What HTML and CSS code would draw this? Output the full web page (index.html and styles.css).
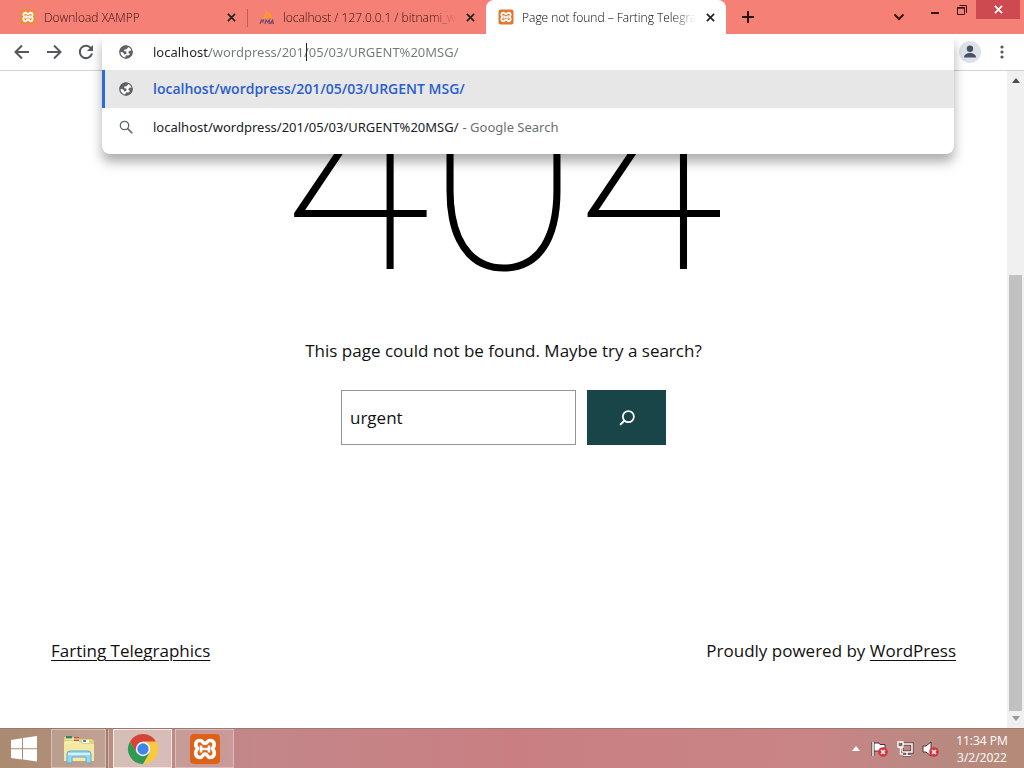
FILE: index.html
```html
<!DOCTYPE html>
<html lang="en">
<head>
<meta charset="utf-8">
<title>Page not found – Farting Telegraphics</title>
<link rel="stylesheet" href="styles.css">
</head>
<body>
<svg class="defs" aria-hidden="true">
  <defs>
    <symbol id="xampp" viewBox="0 0 32 32">
      <rect x="1" y="1" width="30" height="30" rx="4" fill="currentColor"/>
      <path d="M11 7.500C6.500 7.500 5.500 12 8.500 15.500C5 20 7 24.500 11 24.500C14 24.500 13.500 21 16 21C18.500 21 18 24.500 21 24.500C25 24.500 27 20 23.500 15.500C26.500 12 25.500 7.500 21 7.500C18 7.500 18.500 10.500 16 10.500C13.500 10.500 14 7.500 11 7.500Z" fill="none" stroke="#fff" stroke-width="3.600"/>
      <path d="M12 12.500V19.500M20 12.500V19.500M12 16H20" fill="none" stroke="#fff" stroke-width="2.600"/>
    </symbol>
    <symbol id="cross" viewBox="0 0 10 10">
      <path d="M1 1L9 9M9 1L1 9" fill="none" stroke="currentColor" stroke-width="1.900"/>
    </symbol>
    <symbol id="globe" viewBox="0 0 16 16">
      <circle cx="8" cy="8" r="6.200" fill="#fff" stroke="#5f6368" stroke-width="1.300"/>
      <path d="M8.500 1.500C5 1.300 1.500 4 1.500 8L5 8.300L6.200 10.500L8.500 9.800L8.300 7.600L6.300 7.200V5.600L8.600 5.200L10.300 3.300ZM14.500 7L11.800 6.600L10.200 8.200L12 10.200L10.200 11.500L8 11.300L6.800 14.400C11 15 14.600 12 14.500 7Z" fill="#5f6368"/>
    </symbol>
    <symbol id="error" viewBox="0 0 10 10">
      <circle cx="5" cy="5" r="4.800" fill="#d8323c"/>
      <path d="M3 3L7 7M7 3L3 7" stroke="#fff" stroke-width="1.500"/>
    </symbol>
  </defs>
</svg>
<div class="desktop">
  <header class="tabstrip">
    <div class="tab">
      <svg class="favicon amber"><use href="#xampp"/></svg>
      <span class="tab-title">Download XAMPP</span>
      <button class="tab-close" aria-label="Close tab"><svg><use href="#cross"/></svg></button>
    </div>
    <div class="tab divided">
      <svg class="favicon pma" viewBox="0 0 16 16">
        <path d="M8 1V9L3 9.500C5 7 7 4 8 1ZM9 3C12 5 13 7 14 9L9 9.500Z" fill="#f89c2a"/>
        <path d="M1 15L2.500 11H4.500L4 13H2M6 15L7 11L8.500 13L10.500 11L10 15M11 15L13.500 11L14.500 15M12 14H14" fill="none" stroke="#704a70" stroke-width="1.200"/>
      </svg>
      <span class="tab-title">localhost / 127.0.0.1 / bitnami_wo</span>
      <button class="tab-close" aria-label="Close tab"><svg><use href="#cross"/></svg></button>
    </div>
    <div class="tab active">
      <svg class="favicon orange"><use href="#xampp"/></svg>
      <span class="tab-title">Page not found – Farting Telegra</span>
      <button class="tab-close" aria-label="Close tab"><svg><use href="#cross"/></svg></button>
    </div>
    <button class="new-tab" aria-label="New tab"><svg viewBox="0 0 12 12"><path d="M6 0V12M0 6H12" stroke="currentColor" stroke-width="2"/></svg></button>
    <div class="window-buttons">
      <button class="search-tabs" aria-label="Search tabs"><svg viewBox="0 0 12 8"><path d="M1.500 1.500L6 6L10.500 1.500" fill="none" stroke="currentColor" stroke-width="2"/></svg></button>
      <button class="win" aria-label="Minimize"><svg viewBox="0 0 12 12"><path d="M2 9H10" stroke="currentColor" stroke-width="2"/></svg></button>
      <button class="win" aria-label="Restore"><svg viewBox="0 0 12 12"><path d="M1.500 3.500H8.500V10.500H1.500ZM1 4.200H9M3.500 1.500H10.500V9" fill="none" stroke="currentColor"/></svg></button>
      <button class="win close" aria-label="Close"><svg><use href="#cross"/></svg></button>
    </div>
  </header>
  <div class="toolbar">
    <nav class="nav">
      <button aria-label="Back"><svg viewBox="0 0 16 16"><path d="M15 8H2M8 1.500L1.500 8L8 14.500" /></svg></button>
      <button aria-label="Forward"><svg viewBox="0 0 16 16"><path d="M1 8H14M8 1.500L14.500 8L8 14.500"/></svg></button>
      <button aria-label="Reload"><svg viewBox="0 0 16 16"><path d="M13.200 4.500A6.200 6.200 0 1 0 14 9.500"/><path class="solid" d="M15 1V7H9Z"/></svg></button>
    </nav>
    <div class="omnibox">
      <div class="suggestions">
        <div class="row url-row">
          <svg class="row-icon"><use href="#globe"/></svg>
          <div class="url-wrap">
            <input class="url" aria-label="Address" value="localhost/wordpress/201/05/03/URGENT%20MSG/">
            <span class="caret"></span>
          </div>
        </div>
        <a class="row selected" href="#">
          <svg class="row-icon"><use href="#globe"/></svg>
          <span>localhost/wordpress/201/05/03/URGENT MSG/</span>
        </a>
        <a class="row" href="#">
          <svg class="row-icon" viewBox="0 0 16 16"><circle cx="6.500" cy="6.500" r="4.200" fill="none" stroke="#5f6368" stroke-width="1.300"/><path d="M9.600 9.600L14.300 14.300" stroke="#5f6368" stroke-width="1.600"/></svg>
          <span>localhost/wordpress/201/05/03/URGENT%20MSG/</span>
          <span class="muted">- Google Search</span>
        </a>
      </div>
    </div>
    <div class="tools">
      <button class="profile" aria-label="Profile"><svg viewBox="0 0 22 22"><circle cx="11" cy="11" r="11" fill="#dde1ea"/><circle cx="11" cy="7.800" r="3.200" fill="#474f60"/><path d="M5 16.500C5 10.500 17 10.500 17 16.500Z" fill="#474f60"/></svg></button>
      <button class="menu" aria-label="Menu"><svg viewBox="0 0 4 14"><g fill="#55585d"><circle cx="2" cy="2" r="1.600"/><circle cx="2" cy="7" r="1.600"/><circle cx="2" cy="12" r="1.600"/></g></svg></button>
    </div>
  </div>
  <div class="viewport">
    <div class="page">
      <main>
        <h1>404</h1>
        <p>This page could not be found. Maybe try a search?</p>
        <form class="search">
          <input type="text" aria-label="Search" value="urgent">
          <button type="button" aria-label="Search"><svg viewBox="0 0 24 24"><circle cx="13.500" cy="10.500" r="6" fill="none" stroke="#fff" stroke-width="1.900"/><path d="M9.200 14.800L4.500 19.500" stroke="#fff" stroke-width="2.200"/></svg></button>
        </form>
      </main>
      <footer>
        <a href="#">Farting Telegraphics</a>
        <span>Proudly powered by <a href="#">WordPress</a></span>
      </footer>
    </div>
    <div class="scrollbar">
      <svg class="arrow" viewBox="0 0 8 5"><path d="M0 5L4 0L8 5Z" fill="#4f4f4f"/></svg>
      <div class="track"><div class="thumb"></div></div>
      <svg class="arrow" viewBox="0 0 8 5"><path d="M0 0L4 5L8 0Z" fill="#9a9a9a"/></svg>
    </div>
  </div>
  <footer class="taskbar">
    <button class="start" aria-label="Start"><svg viewBox="0 0 28 28"><path d="M1 5L12 3.300V13.300H1ZM13 3.100L27 1V13.300H13ZM1 14.300H12V24.500L1 23ZM13 14.300H27V26.500L13 24.600Z" fill="#fff"/></svg></button>
    <button class="app stacked" aria-label="File Explorer"><svg viewBox="0 0 32 32">
      <path d="M1 4H10L12 6H29L31 8V27H1Z" fill="#e4d275"/><path d="M3 3H9V6H3Z" fill="#338a65"/><path d="M11 4H16V8H11Z" fill="#c4513c"/><path d="M19 7H26V10H19Z" fill="#f7faf2"/><path d="M20 7H23V9H20Z" fill="#3b8ac7"/>
      <path d="M1 9H17L19 11H31V28H1Z" fill="#f4e9a2"/><path d="M2 9H16M3 6H16" stroke="#fffbe0"/>
      <path d="M4 30V21Q4 18 7 18H25Q28 18 28 21V30H23V24H9V30Z" fill="#9bd5ee" stroke="#5bacd1"/><path d="M5 21H27" stroke="#e8faff" stroke-width="1.500"/>
    </svg></button>
    <button class="app current" aria-label="Google Chrome"><svg viewBox="0 0 32 32">
      <circle cx="16" cy="16" r="15" fill="#fbc93f"/>
      <path d="M3 8.500A15 15 0 0 1 29 8.500H16L9.500 19.700Z" fill="#d5433a"/>
      <path d="M3 8.500A15 15 0 0 0 16 31L22.500 19.700H9.500Z" fill="#2f9a55"/>
      <circle cx="16" cy="16" r="7.200" fill="#fff"/><circle cx="16" cy="16" r="5.700" fill="#4285e8"/>
    </svg></button>
    <button class="app" aria-label="XAMPP"><svg class="deep"><use href="#xampp"/></svg></button>
    <div class="tray">
      <svg class="chevron" viewBox="0 0 8 5"><path d="M0 5L4 0L8 5Z" fill="#fff"/></svg>
      <svg viewBox="0 0 18 18"><path d="M2 2V16" stroke="#4c3434" stroke-width="3"/><path d="M3 3H8L9 4.500H14V11H3Z" fill="#fff" stroke="#4c3434"/><path d="M2 2V16" stroke="#fff" stroke-width="1.500"/><use href="#error" x="7" y="7" width="10" height="10"/></svg>
      <svg viewBox="0 0 18 18"><path d="M6 4H16V12H6ZM11 12V15M7 15.500H15" fill="none" stroke="#4c3434" stroke-width="3"/><path d="M6 4H16V12H6ZM11 12V15M7 15.500H15" fill="none" stroke="#fff" stroke-width="1.500"/><path d="M2 2H7V7H2ZM4.500 7V14H7" fill="#8a6762" stroke="#fff" stroke-width="1.300"/></svg>
      <svg viewBox="0 0 18 18"><path d="M2 6H5L10 2V16L5 12H2Z" fill="#fff" stroke="#4c3434"/><use href="#error" x="8" y="7" width="10" height="10"/></svg>
      <time class="clock"><span>11:34 PM</span><span>3/2/2022</span></time>
    </div>
  </footer>
</div>
</body>
</html>
```
FILE: styles.css
```css
* { box-sizing: border-box; }
body { margin: 0; font-family: "Open Sans", "Noto Sans", sans-serif; }
button { border: 0; padding: 0; background: none; color: inherit; font: inherit; display: flex; align-items: center; justify-content: center; }
svg { display: block; flex: none; }
a { color: inherit; }
.defs { display: none; }
.desktop { display: flex; flex-direction: column; height: 100vh; min-height: 640px; background: #fff; overflow: hidden; }

.tabstrip { display: flex; height: 34px; flex: none; background: #f58076; color: #35110f; }
.tab { display: flex; align-items: center; flex: 0 1 239px; padding: 0 8px 0 20px; font-size: 12px; font-weight: 300; min-width: 0; }
.tab:first-child { flex-basis: 247px; }
.tab.divided { padding-left: 12px; background: linear-gradient(#b9605a, #b9605a) 0 9px / 1px 18px no-repeat; }
.tab.active { flex-basis: 240px; background: #fff; color: #000; border-radius: 8px 8px 0 0; padding-left: 12px; }
.favicon { width: 16px; height: 16px; margin-right: 8px; }
.amber { color: #ee8c3a; }
.orange { color: #e0762f; }
.deep { color: #dd6116; }
.tab-title { flex: 1; white-space: nowrap; overflow: hidden; margin-right: 6px; mask-image: linear-gradient(90deg, #000 calc(100% - 24px), transparent); }
.tab-close { width: 16px; height: 16px; color: #222; }
.tab-close svg { width: 9px; height: 9px; }
.new-tab { width: 44px; color: #2b1210; }
.new-tab svg { width: 12px; height: 12px; }
.window-buttons { display: flex; margin-left: auto; padding-right: 4px; }
.search-tabs { width: 44px; }
.search-tabs svg { width: 12px; height: 8px; }
.win { width: 27px; height: 19px; }
.win svg { width: 12px; height: 12px; }
.win.close { width: 44px; margin-left: 1px; background: #cd4a50; color: #fff; }
.win.close svg { width: 9px; height: 9px; }

.toolbar { display: flex; height: 37px; flex: none; border-bottom: 1px solid #d0d0d0; }
.nav { display: flex; align-items: center; width: 102px; padding-left: 6px; }
.nav button { width: 32px; height: 32px; }
.nav svg { width: 16px; height: 16px; fill: none; stroke: #55585d; stroke-width: 2; }
.nav .solid { fill: #55585d; stroke: none; }
.omnibox { position: relative; flex: 1; }
.suggestions { position: absolute; z-index: 2; top: 0; left: 0; right: 0; padding-bottom: 8px; background: #fff; border-radius: 8px; box-shadow: 0 8px 12px rgba(0, 0, 0, .32); clip-path: inset(4px -20px -30px -20px); }
.row { display: flex; align-items: center; height: 38px; padding-left: 16px; font-family: "Noto Sans", "Open Sans", sans-serif; font-size: 13px; line-height: 18px; color: #202124; text-decoration: none; white-space: nowrap; }
.url-row { height: 36px; }
.row-icon { width: 16px; height: 16px; margin-right: 19px; }
.row.selected { background: #e7e7e7; color: #2b5fc9; font-family: "Open Sans", "Noto Sans", sans-serif; font-size: 14px; font-weight: 600; border-left: 3px solid #2f6ad9; padding-left: 13px; }
.muted { margin-left: 4px; color: #6b6f74; }
.url-wrap { position: relative; flex: 1; }
.url { display: block; width: 100%; border: 0; padding: 0; outline: 0; font: inherit; color: transparent; background: linear-gradient(90deg, #202124 56px, #73777c 56px); -webkit-background-clip: text; background-clip: text; }
.caret { position: absolute; left: 153px; top: 0; width: 1px; height: 18px; background: #222; }
.tools { display: flex; align-items: center; justify-content: space-between; width: 70px; padding: 0 20px 0 5px; }
.profile svg { width: 22px; height: 22px; }
.menu svg { width: 4px; height: 14px; }

.viewport { display: flex; flex: 1; min-height: 0; }
.page { flex: 1; display: flex; flex-direction: column; justify-content: space-between; font-size: 17px; line-height: 28px; color: #111; }
main { display: flex; flex-direction: column; align-items: center; }
h1 { margin: 0; font-family: Roboto, sans-serif; font-weight: 100; font-size: 268px; line-height: 212px; color: #000; }
p { margin: 54px 0 25px; }
.search { display: flex; gap: 11px; }
.search input { width: 235px; height: 55px; border: 1px solid #949494; padding: 0 8px; font: inherit; color: #111; }
.search button { width: 79px; background: #1a4548; }
.search button svg { width: 22px; height: 22px; }
.page footer { display: flex; justify-content: space-between; padding: 0 51px 63px; }
.page footer a { text-underline-offset: 3px; text-decoration-thickness: 1px; }
.scrollbar { display: flex; flex-direction: column; align-items: center; width: 17px; padding: 7px 0; background: #f0f0f0; }
.arrow { width: 8px; height: 5px; }
.track { flex: 1; display: flex; flex-direction: column; justify-content: flex-end; width: 13px; padding-bottom: 5px; }
.thumb { height: 69.5%; background: #c1c1c1; }

.taskbar { display: flex; height: 40px; flex: none; background: linear-gradient(90deg, #aa8a70 0, #b59080 10%, #c38689 25%, #c97f82 50%, #c98486 80%, #b98982 91%, #b58a77 100%); border-top: 1px solid #9b7973; color: #fff; }
.start { width: 48px; }
.start svg { width: 28px; height: 28px; }
.app { width: 59px; margin-left: 3px; border: 1px solid rgba(255, 255, 255, .35); background: rgba(255, 255, 255, .15); }
.app svg { width: 32px; height: 32px; }
.app.stacked { width: 55px; box-shadow: 2px 0 #a17d73, 3px 0 #d2b4aa; }
.app.current { margin-left: 7px; border: 1px solid #f5e6e2; background: rgba(255, 255, 255, .42); }
.tray { display: flex; align-items: center; gap: 7px; margin-left: auto; }
.tray svg { width: 18px; height: 18px; }
.tray .chevron { width: 8px; height: 5px; margin-right: 4px; }
.clock { display: flex; flex-direction: column; align-items: center; width: 78px; padding-right: 6px; font-size: 12px; line-height: 17px; }
```
